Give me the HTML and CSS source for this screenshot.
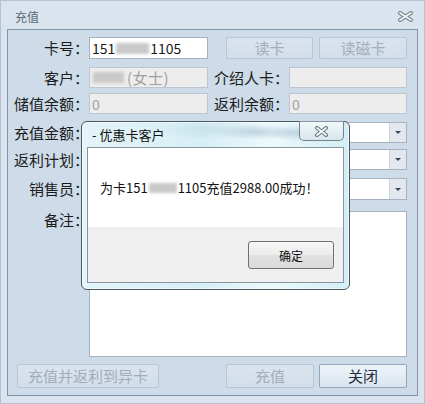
FILE: index.html
```html
<!DOCTYPE html>
<html>
<head>
<meta charset="utf-8">
<link rel="stylesheet" href="styles.css">
</head>
<body>
<div class="win">
  <div class="titlebar">
    <span class="title">充值</span>
    <svg class="winx" width="17" height="11" viewBox="0 0 17 11">
      <path d="M3 2 L14 9 M14 2 L3 9" stroke="#7d8590" stroke-width="4" stroke-linecap="round"/>
      <path d="M3 2 L14 9 M14 2 L3 9" stroke="#f4f6f8" stroke-width="1.8" stroke-linecap="round"/>
    </svg>
  </div>
  <div class="panel">
    <div class="row r1">
      <span class="lbl">卡号：</span>
      <div class="field half"><span>151</span><span class="blur b34"></span><span>1105</span></div>
      <button class="btn dis bw87 ml18">读卡</button>
      <button class="btn dis bw88 ml6">读磁卡</button>
    </div>
    <div class="row r2">
      <span class="lbl">客户：</span>
      <div class="field half off"><span class="blur b32"></span><span class="grey big">(女士)</span></div>
      <span class="lbl">介绍人卡：</span>
      <div class="field half2 off"></div>
    </div>
    <div class="row r3">
      <span class="lbl">储值余额：</span>
      <div class="field half off"><span class="grey">0</span></div>
      <span class="lbl">返利余额：</span>
      <div class="field half2 off"><span class="grey">0</span></div>
    </div>
    <div class="row r4">
      <span class="lbl">充值金额：</span>
      <div class="field full combo"><span class="ctext"></span><span class="arrow"><i></i></span></div>
    </div>
    <div class="row r5">
      <span class="lbl">返利计划：</span>
      <div class="field full combo"><span class="ctext"></span><span class="arrow"><i></i></span></div>
    </div>
    <div class="row r6">
      <span class="lbl">销售员：</span>
      <div class="field full combo"><span class="ctext"></span><span class="arrow"><i></i></span></div>
    </div>
    <div class="row r7">
      <span class="lbl">备注：</span>
      <div class="field full memo"></div>
    </div>
    <div class="row r8">
      <button class="btn dis bw142 ml9">充值并返利到异卡</button>
      <button class="btn dis bw88 ml67">充值</button>
      <button class="btn act bw88 ml5">关闭</button>
    </div>
  </div>
</div>

<div class="dialog">
  <div class="dtitle">- 优惠卡客户</div>
  <div class="dclose">
    <svg width="15" height="11" viewBox="0 0 15 11">
      <path d="M3 2 L12 9 M12 2 L3 9" stroke="#6d7782" stroke-width="4" stroke-linecap="round"/>
      <path d="M3 2 L12 9 M12 2 L3 9" stroke="#f6f8fa" stroke-width="1.8" stroke-linecap="round"/>
    </svg>
  </div>
  <div class="client">
    <div class="msgarea">
      <span>为卡151</span><span class="blur b30 small"></span><span>1105充值2988.00成功！</span>
    </div>
    <div class="btnarea">
      <button class="okbtn">确定</button>
    </div>
  </div>
</div>
</body>
</html>
```

FILE: styles.css
```css
* { box-sizing: border-box; margin: 0; padding: 0; }
html, body { width: 425px; height: 404px; overflow: hidden; }
body {
  position: relative;
  background: #dae4ef;
  font-family: "Noto Sans CJK SC", "Noto Sans", sans-serif;
  color: #1a1a1a;
}
.win {
  width: 425px;
  height: 404px;
  border: 1px solid #b3c1d0;
  background: #dae4ef;
}
.titlebar {
  height: 28px;
  display: flex;
  align-items: center;
  padding: 3px 10px 0 14px;
}
.title { font-size: 12px; color: #5e6975; line-height: 14px; }
.winx { margin-left: auto; }

.panel {
  margin: 0 6px;
  height: 367px;
  border: 1px solid #8294a8;
  background: #cedbe9;
  padding-top: 7px;
}
.row { display: flex; align-items: stretch; }
.r1 { height: 22px; }
.r2 { height: 21px; margin-top: 8px; }
.r3 { height: 21px; margin-top: 5px; }
.r4 { height: 21px; margin-top: 8px; }
.r5 { height: 21px; margin-top: 6px; }
.r6 { height: 22px; margin-top: 8px; }
.r7 { height: 146px; margin-top: 11px; align-items: flex-start; }
.r8 { height: 24px; margin-top: 7px; }

.lbl {
  width: 81px;
  text-align: right;
  font-size: 15px;
  line-height: 21px;
  white-space: nowrap;
  color: #1b1b1b;
  flex: none;
}
.r7 .lbl { line-height: 18px; }

.field {
  height: 100%;
  border: 1px solid #a6b2c0;
  background: #fff;
  display: flex;
  align-items: center;
  padding-left: 2px;
  font-size: 14px;
  line-height: 16px;
  flex: none;
}
.half { width: 119px; }
.half2 { width: 118px; }
.full { width: 318px; }
.off { background: #ededed; border-color: #bcc6d1; }
.grey { color: #a0a0a0; }
.big { font-size: 15px; margin-left: 2px; letter-spacing: 0.5px; }
.blur {
  display: inline-block;
  height: 11px;
  background: #c9c9c9;
  filter: blur(1.6px);
  margin: 0 1px;
}
.b34 { width: 33px; }
.b32 { width: 31px; }
.b30 { width: 28px; }
.small { height: 10px; }

.combo { padding-left: 0; }
.ctext { flex: 1; }
.arrow {
  width: 17px;
  height: 100%;
  background: #e3e8ee;
  border-left: 1px solid #cdd5de;
  display: flex;
  align-items: center;
  justify-content: center;
}
.arrow i {
  display: block;
  width: 0; height: 0;
  border-left: 3px solid transparent;
  border-right: 3px solid transparent;
  border-top: 3px solid #3e4852;
}
.memo { height: 146px; }

.btn {
  height: 100%;
  border: 1px solid #b8c5d3;
  border-radius: 2px;
  background: linear-gradient(#dae4ee, #d2deea);
  color: #a3adb8;
  font-family: "Noto Sans CJK SC", "Noto Sans", sans-serif;
  font-size: 15px;
  line-height: 18px;
  flex: none;
}
.act {
  border-color: #94a6ba;
  background: linear-gradient(#edf3f9, #dae5f0);
  color: #1f2d3d;
}
.bw87 { width: 87px; }
.bw88 { width: 88px; }
.bw142 { width: 142px; }
.ml18 { margin-left: 18px; }
.ml6 { margin-left: 6px; }
.ml9 { margin-left: 9px; }
.ml67 { margin-left: 67px; }
.ml5 { margin-left: 5px; }

/* message box */
.dialog {
  position: absolute;
  left: 81px;
  top: 121px;
  width: 269px;
  height: 169px;
  border: 1px solid #4e565e;
  border-radius: 6px;
  background:
    radial-gradient(ellipse 40px 8px at 175px 10px, rgba(150,175,200,0.45), transparent),
    radial-gradient(ellipse 30px 8px at 215px 11px, rgba(120,150,185,0.35), transparent),
    radial-gradient(ellipse 60px 10px at 130px 8px, rgba(170,200,215,0.35), transparent),
    linear-gradient(90deg, #e4f4f8 0%, #d6eff5 45%, #ecf9fb 70%, #d3eef5 100%);
  padding: 0 5px 6px 5px;
  box-shadow: 0 0 0 1px rgba(255,255,255,0.5) inset;
}
.dtitle {
  height: 25px;
  font-size: 13px;
  line-height: 25px;
  padding-left: 5px;
  color: #111;
}
.dclose {
  position: absolute;
  right: 5px;
  top: -1px;
  width: 45px;
  height: 20px;
  border: 1px solid #74828f;
  border-top-color: #8a97a3;
  border-radius: 0 0 5px 5px;
  background: linear-gradient(#f2f8fa, #d8e6ec);
  display: flex;
  align-items: center;
  justify-content: center;
}
.client {
  width: 257px;
  height: 136px;
  border: 1px solid #8995a1;
  display: flex;
  flex-direction: column;
}
.msgarea {
  height: 79px;
  background: #fff;
  padding-left: 12px;
  font-size: 13px;
  line-height: 18px;
  display: flex;
  align-items: center;
  color: #111;
  white-space: nowrap;
}
.btnarea {
  flex: 1;
  background: #f0f0f0;
  padding: 14px 0 0 160px;
}
.okbtn {
  width: 86px;
  height: 28px;
  border: 1px solid #707070;
  border-radius: 3px;
  background: linear-gradient(#f6f6f6, #ececec 50%, #e2e2e2 51%, #dadada);
  font-family: "Noto Sans CJK SC", "Noto Sans", sans-serif;
  font-size: 12px;
  color: #111;
}
```
